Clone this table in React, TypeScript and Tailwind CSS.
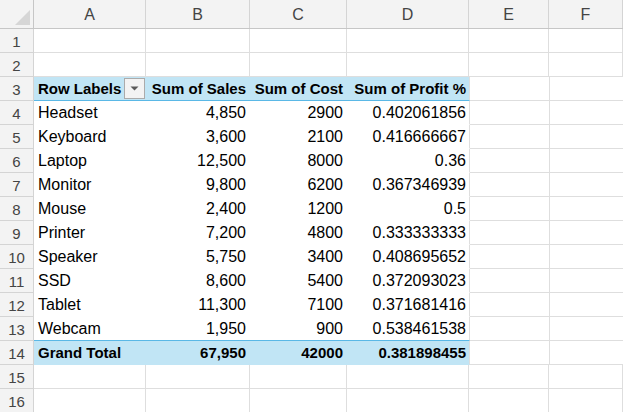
import React from 'react';

const rows = [
  { label: 'Headset', sales: '4,850', cost: '2900', profit: '0.402061856' },
  { label: 'Keyboard', sales: '3,600', cost: '2100', profit: '0.416666667' },
  { label: 'Laptop', sales: '12,500', cost: '8000', profit: '0.36' },
  { label: 'Monitor', sales: '9,800', cost: '6200', profit: '0.367346939' },
  { label: 'Mouse', sales: '2,400', cost: '1200', profit: '0.5' },
  { label: 'Printer', sales: '7,200', cost: '4800', profit: '0.333333333' },
  { label: 'Speaker', sales: '5,750', cost: '3400', profit: '0.408695652' },
  { label: 'SSD', sales: '8,600', cost: '5400', profit: '0.372093023' },
  { label: 'Tablet', sales: '11,300', cost: '7100', profit: '0.371681416' },
  { label: 'Webcam', sales: '1,950', cost: '900', profit: '0.538461538' },
];

const cols = ['A', 'B', 'C', 'D', 'E', 'F'];
const widths = ['w-[112px]', 'w-[104px]', 'w-[97px]', 'w-[122px]', 'w-[80px]', 'flex-1'];

function RowNum({ n }: { n: number }) {
  return (
    <div className="w-[34px] shrink-0 h-full bg-[#f3f3f3] border-r border-b border-[#d4d4d4] text-[#444] text-[15px] flex items-center justify-center leading-none pt-[2px]">
      {n}
    </div>
  );
}

// plain grid row (empty cells)
function EmptyRow({ n }: { n: number }) {
  return (
    <div className="flex h-[24px]">
      <RowNum n={n} />
      {widths.map((w, i) => (
        <div key={i} className={`${w} shrink-0 border-r border-b border-[#dedede]`} />
      ))}
    </div>
  );
}

function Tail() {
  return (
    <>
      <div className="w-[80px] shrink-0 border-r border-b border-[#dedede]" />
      <div className="flex-1 border-b border-[#dedede]" />
    </>
  );
}

export default function App() {
  return (
    <div className="w-[623px] h-[412px] overflow-hidden bg-white text-black" style={{ fontFamily: '"Liberation Sans", Arial, sans-serif' }}>
      {/* column headers */}
      <div className="flex h-[29px] bg-[#f3f3f3] border-b border-[#c6c6c6]">
        <div className="w-[34px] shrink-0 border-r border-[#c6c6c6] relative">
          <svg className="absolute left-0 top-0" width="33" height="28" viewBox="0 0 33 28">
            <polygon points="15,25 30,25 30,10" fill="#d6d6d6" />
          </svg>
        </div>
        {cols.map((c, i) => (
          <div
            key={c}
            className={`${widths[i]} shrink-0 border-r border-[#d4d4d4] flex items-center justify-center text-[16px] text-[#444] pt-[2px]`}
          >
            {c}
          </div>
        ))}
      </div>

      <EmptyRow n={1} />
      <EmptyRow n={2} />

      {/* pivot header */}
      <div className="flex h-[24px]">
        <RowNum n={3} />
        <div className="flex w-[436px] shrink-0 bg-[#c1e5f5] border-b border-[#5ab8e6] border-r border-r-[#dedede] font-bold text-[15px] leading-[24px]">
          <div className="w-[112px] shrink-0 pl-[4px] flex items-center justify-between pr-[1px]">
            <span>Row Labels</span>
            <span className="w-[21px] h-[21px] bg-[#f3f3f3] border border-[#ababab] flex items-center justify-center">
              <svg width="9" height="5" viewBox="0 0 9 5">
                <polygon points="0.5,0.5 8.5,0.5 4.5,4.5" fill="#5a5a5a" />
              </svg>
            </span>
          </div>
          <div className="w-[104px] shrink-0 text-right pr-[4px]">Sum of Sales</div>
          <div className="w-[97px] shrink-0 text-right pr-[4px]">Sum of Cost</div>
          <div className="w-[122px] shrink-0 text-right pr-[3px] whitespace-nowrap">Sum of Profit %</div>
        </div>
        <Tail />
      </div>

      {rows.map((r, i) => (
        <div key={r.label} className="flex h-[24px]">
          <RowNum n={i + 4} />
          <div
            className={`flex w-[436px] shrink-0 border-r border-r-[#dedede] text-[16px] leading-[24px] ${
              i === rows.length - 1 ? 'border-b border-b-[#5ab8e6]' : 'border-b border-b-white'
            }`}
          >
            <div className="w-[112px] shrink-0 pl-[4px]">{r.label}</div>
            <div className="w-[104px] shrink-0 text-right pr-[4px]">{r.sales}</div>
            <div className="w-[97px] shrink-0 text-right pr-[4px]">{r.cost}</div>
            <div className="w-[122px] shrink-0 text-right pr-[3px]">{r.profit}</div>
          </div>
          <Tail />
        </div>
      ))}

      {/* grand total */}
      <div className="flex h-[24px]">
        <RowNum n={14} />
        <div className="flex w-[436px] shrink-0 bg-[#c1e5f5] border-b border-b-[#c1e5f5] border-r border-r-[#dedede] font-bold text-[15px] leading-[24px]">
          <div className="w-[112px] shrink-0 pl-[4px]">Grand Total</div>
          <div className="w-[104px] shrink-0 text-right pr-[4px]">67,950</div>
          <div className="w-[97px] shrink-0 text-right pr-[4px]">42000</div>
          <div className="w-[122px] shrink-0 text-right pr-[3px]">0.381898455</div>
        </div>
        <Tail />
      </div>

      <EmptyRow n={15} />
      <EmptyRow n={16} />
    </div>
  );
}
